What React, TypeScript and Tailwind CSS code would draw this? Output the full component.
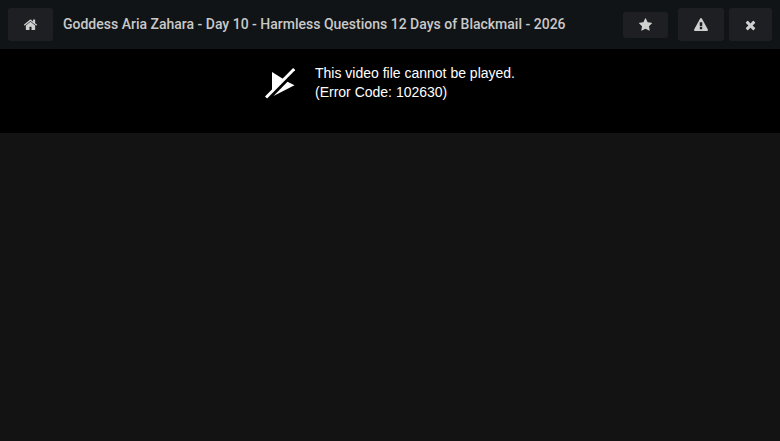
import type { ButtonHTMLAttributes } from "react";

interface IconProps {
  path: string;
  viewBox: string;
  className: string;
}

const ICONS = {
  home: "M1408 992v480q0 26-19 45t-45 19h-384v-384h-256v384h-384q-26 0-45-19t-19-45v-480q0-1 .5-3t.5-3l575-474 575 474q1 2 1 6zm223-69l-62 74q-8 9-21 11h-3q-13 0-21-7l-692-577-692 577q-12 8-24 7-13-2-21-11l-62-74q-8-10-7-23.5t11-21.5l719-599q32-26 76-26t76 26l244 204v-195q0-14 9-23t23-9h192q14 0 23 9t9 23v408l219 182q10 8 11 21.5t-7 23.5z",
  star: "M1728 647q0 22-26 48l-363 354 86 500q1 7 1 20 0 21-10.5 35.5t-30.5 14.5q-19 0-40-12l-449-236-449 236q-22 12-40 12-21 0-31.5-14.5t-10.5-35.5q0-6 2-20l86-500-364-354q-25-27-25-48 0-37 56-46l502-73 225-455q19-41 49-41t49 41l225 455 502 73q56 9 56 46z",
  warning:
    "M1050 1400v-240q0-24-24-24h-260q-24 0-24 24v240q0 24 24 24h260q24 0 24-24zm-4-374l18-459q0-12-10-19-13-11-24-11h-268q-11 0-24 11-10 7-10 21l17 457q0 10 10 16.5t24 6.5h233q14 0 23.5-6.5t10.5-16.5zm-38-959l768 1408q35 63-2 126-17 29-46.5 46t-63.5 17h-1536q-34 0-63.5-17t-46.5-46q-37-63-2-126l768-1408q17-31 47-49t65-18 65 18 47 49z",
  close:
    "M1490 1322q0 40-28 68l-136 136q-28 28-68 28t-68-28l-294-294-294 294q-28 28-68 28t-68-28l-136-136q-28-28-28-68t28-68l294-294-294-294q-28-28-28-68t28-68l136-136q28-28 68-28t68 28l294 294 294-294q28-28 68-28t68 28l136 136q28 28 28 68t-28 68l-294 294 294 294q28 28 28 68z",
};

function Icon({ path, viewBox, className }: IconProps) {
  return (
    <svg viewBox={viewBox} className={className} fill="currentColor" aria-hidden="true">
      <path d={path} />
    </svg>
  );
}

function BarButton({ className = "h-[33px]", children, ...rest }: ButtonHTMLAttributes<HTMLButtonElement>) {
  return (
    <button
      type="button"
      className={`flex shrink-0 items-center justify-center rounded-[3px] bg-[#1e1f22] px-4 text-[#d0d0d0] hover:bg-[#292a2e] ${className}`}
      {...rest}
    >
      {children}
    </button>
  );
}

export default function App() {
  return (
    <div className="min-h-screen bg-[#131313]">
      <header className="flex items-center bg-[#111416] p-2">
        <a
          href="#"
          aria-label="Home"
          className="flex h-[33px] shrink-0 items-center rounded-[3px] bg-[#1e1f22] px-4 text-[#d0d0d0] hover:bg-[#292a2e]"
        >
          <Icon path={ICONS.home} viewBox="26 60 1612 1736" className="h-3.5 w-[13px]" />
        </a>
        <h1 className="min-w-0 flex-1 truncate px-2.5 pb-0.5 font-['Roboto',sans-serif] text-sm font-medium text-[#c9c9c9]">
          Goddess Aria Zahara - Day 10 - Harmless Questions 12 Days of Blackmail - 2026
        </h1>
        <div className="flex shrink-0 items-center">
          <BarButton aria-label="Add to favorites" className="mr-2.5 h-[26px]">
            <Icon path={ICONS.star} viewBox="64 0 1664 1792" className="h-3.5 w-[13px]" />
          </BarButton>
          <BarButton aria-label="Report" className="mr-[5px] h-[33px]">
            <Icon path={ICONS.warning} viewBox="0 0 1792 1792" className="size-3.5" />
          </BarButton>
          <BarButton aria-label="Close">
            <Icon path={ICONS.close} viewBox="192 0 1408 1792" className="h-3.5 w-[11px]" />
          </BarButton>
        </div>
      </header>

      <section className="flex justify-center gap-5 bg-black pt-[15px] pb-[31px] text-white">
        {/* Crossed-out play triangle */}
        <svg viewBox="0 0 30 32" className="mt-[3px] h-8 w-[30px]" fill="currentColor" aria-hidden="true">
          <path d="M7 5 L18.6 12.2 L7 24 Z" />
          <path d="M22.5 14.8 L29.5 18.3 L8.5 29 Z" />
          <path d="M1 30.5 L29.2 2" stroke="currentColor" strokeWidth="3" fill="none" />
        </svg>
        <p role="alert" className="font-['Liberation_Sans',Arial,sans-serif] text-sm leading-[19px]">
          This video file cannot be played.
          <br />
          (Error Code: 102630)
        </p>
      </section>
    </div>
  );
}
